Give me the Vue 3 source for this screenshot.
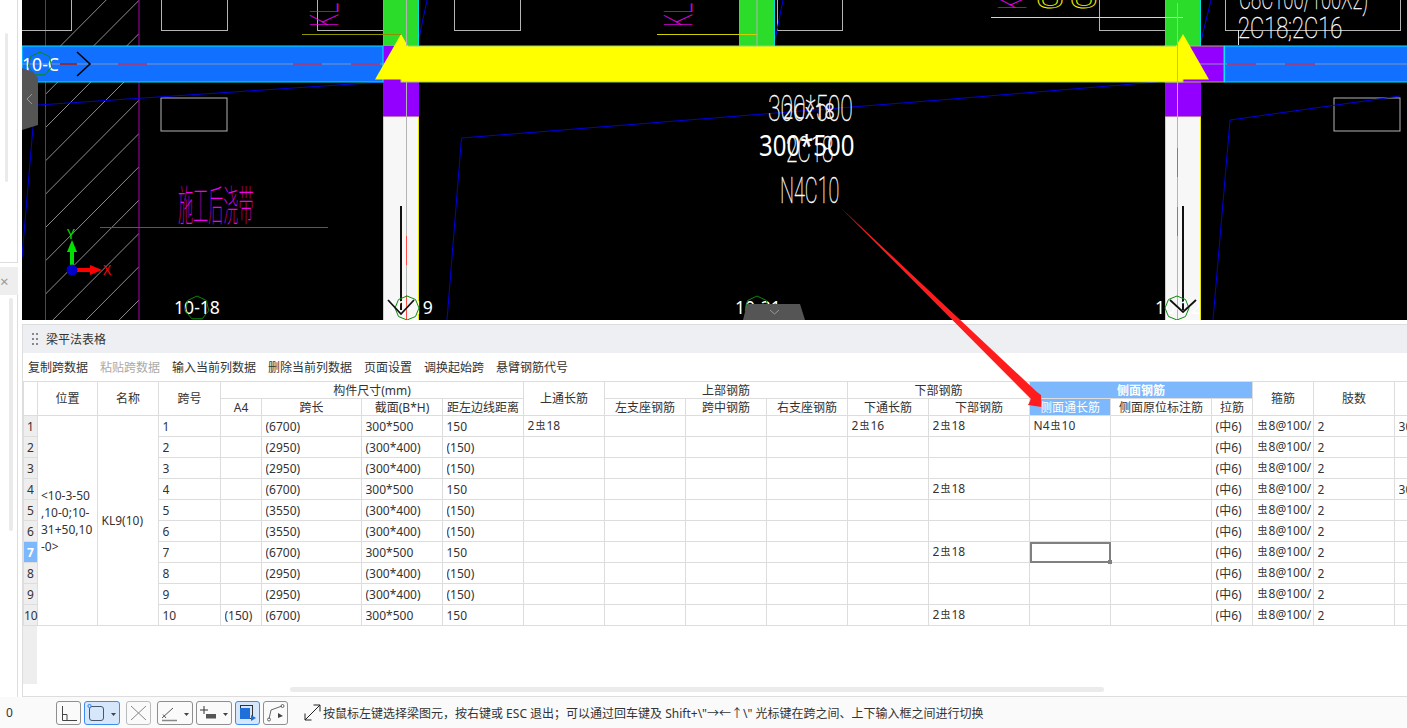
<script setup>
// column widths of the beam table, in pixels
const colWidths = [14, 60, 61, 62, 41, 100, 81, 81, 81, 81, 81, 81, 81, 101, 81, 101, 41, 61, 81, 100]

const tools = ['复制跨数据', '粘贴跨数据', '输入当前列数据', '删除当前列数据', '页面设置', '调换起始跨', '悬臂钢筋代号']

const topSteel = '2虫18'
const stirrup = '虫8@100/'
const rows = [
  ['1', '', '(6700)', '300*500', '150', topSteel, '', '', '', '2虫16', topSteel, 'N4虫10', '', '(中6)', stirrup, '2', '300*500'],
  ['2', '', '(2950)', '(300*400)', '(150)', '', '', '', '', '', '', '', '', '(中6)', stirrup, '2', ''],
  ['3', '', '(2950)', '(300*400)', '(150)', '', '', '', '', '', '', '', '', '(中6)', stirrup, '2', ''],
  ['4', '', '(6700)', '300*500', '150', '', '', '', '', '', topSteel, '', '', '(中6)', stirrup, '2', '300*500'],
  ['5', '', '(3550)', '(300*400)', '(150)', '', '', '', '', '', '', '', '', '(中6)', stirrup, '2', ''],
  ['6', '', '(3550)', '(300*400)', '(150)', '', '', '', '', '', '', '', '', '(中6)', stirrup, '2', ''],
  ['7', '', '(6700)', '300*500', '150', '', '', '', '', '', topSteel, '', '', '(中6)', stirrup, '2', ''],
  ['8', '', '(2950)', '(300*400)', '(150)', '', '', '', '', '', '', '', '', '(中6)', stirrup, '2', ''],
  ['9', '', '(2950)', '(300*400)', '(150)', '', '', '', '', '', '', '', '', '(中6)', stirrup, '2', ''],
  ['10', '(150)', '(6700)', '300*500', '150', '', '', '', '', '', topSteel, '', '', '(中6)', stirrup, '2', '']
]

// the steel grade sign is drawn smaller than the rest of the cell
const splitSteel = (text) => text.split(/(虫)/).filter(Boolean)

const hatchLines = Array.from({ length: 12 }, (_, i) => -33 + i * 33.3)

const ngon = (cx, cy, r, n) =>
  Array.from({ length: n }, (_, i) => {
    const a = (i / n) * Math.PI * 2 - Math.PI / 2
    return `${(cx + r * Math.cos(a)).toFixed(1)},${(cy + r * Math.sin(a)).toFixed(1)}`
  }).join(' ')

const topRects = [[-10, 71], [161, 227], [317, 383], [454, 520], [777, 842], [1099, 1165], [1225, 1400]]
</script>

<template>
  <div class="page">
    <div class="main">
      <aside class="side">
        <div class="side-top"><i class="side-scroll"></i></div>
        <div class="side-title">×</div>
        <div class="side-bottom"><i class="side-scroll low"></i></div>
      </aside>

      <div class="work">
        <svg class="cad" viewBox="22 0 1385 320" width="1385" height="320">
          <rect x="22" y="0" width="1385" height="320" fill="#000" />

          <!-- hatch of the post-cast strip -->
          <clipPath id="hatchClip"><rect x="45.5" y="0" width="93.5" height="320" /></clipPath>
          <g clip-path="url(#hatchClip)" stroke="#8f8f8f" stroke-width="1">
            <line v-for="y in hatchLines" :key="y" x1="45.5" :y1="y + 94" x2="139" :y2="y" />
          </g>
          <line x1="45.5" y1="0" x2="45.5" y2="320" stroke="#b000b0" />
          <line x1="139" y1="0" x2="139" y2="320" stroke="#b000b0" />

          <!-- small outlined boxes -->
          <g fill="none" stroke="#b4b4b4" stroke-width="1">
            <rect v-for="r in topRects" :key="r[0]" :x="r[0] + 0.5" y="-10" :width="r[1] - r[0]" height="40.5" />
            <rect x="161" y="98" width="66" height="33" />
            <rect x="1334" y="98" width="66" height="33" />
          </g>

          <!-- slab boundaries -->
          <g fill="none" stroke="#0000e0" stroke-width="1">
            <polyline points="22,257 33,127 38,105 383,82" />
            <polyline points="447,320 461.5,138 940,100 1157,82" />
            <polyline points="1213,320 1230,120 1400,96" />
            <line x1="418" y1="43" x2="427" y2="0" />
            <line x1="774" y1="45" x2="783" y2="0" />
            <line x1="1200" y1="45" x2="1211" y2="0" />
          </g>

          <!-- columns -->
          <g fill="#2bdc2b" stroke="#00e0e0" stroke-width="1">
            <rect x="383.5" y="-2" width="35" height="48" />
            <rect x="739.5" y="-2" width="35" height="48" />
            <rect x="1165.5" y="-2" width="35" height="48" />
          </g>
          <g fill="#f7f7f7" stroke="#e8e800" stroke-width="1">
            <rect x="383.5" y="116" width="35" height="206" />
            <rect x="1165.5" y="116" width="35" height="206" />
          </g>
          <rect x="383" y="82" width="36" height="34.5" fill="#9400ff" />
          <rect x="1165" y="82" width="36" height="34.5" fill="#9400ff" />
          <rect x="383" y="46" width="36" height="36" fill="#9400ff" />
          <rect x="1165" y="46" width="59" height="36" fill="#9400ff" stroke="#b0b050" />

          <!-- beam KL9, the blue parts are the unselected spans -->
          <rect x="22" y="46" width="361" height="36" fill="#1170ff" stroke="#00e8ff" />
          <rect x="1224.5" y="46" width="190" height="36" fill="#1170ff" stroke="#00e8ff" />
          <line x1="22" y1="64" x2="401" y2="64" stroke="#8494c4" />
          <line x1="1183" y1="64" x2="1407" y2="64" stroke="#8494c4" />
          <g stroke="#a82c70" stroke-width="1.5">
            <line x1="60" y1="64" x2="77" y2="64" stroke="#a01010" />
            <line x1="118" y1="64" x2="147" y2="64" />
            <line x1="293" y1="64" x2="322" y2="64" />
            <line x1="351" y1="64" x2="380" y2="64" />
            <line x1="1227" y1="64" x2="1256" y2="64" />
            <line x1="1285" y1="64" x2="1315" y2="64" />
          </g>

          <!-- selected span in yellow -->
          <rect x="401" y="46" width="782" height="36" fill="#ff0" stroke="#9ad070" stroke-width="1" />
          <polygon points="401,34 375,79.5 427,79.5" fill="#ff0" />
          <polygon points="1183,34 1157,79.5 1209,79.5" fill="#ff0" />
          <line x1="302" y1="34.5" x2="401" y2="34.5" stroke="#8f8f00" />
          <line x1="657" y1="34.5" x2="757" y2="34.5" stroke="#d0d000" />
          <line x1="991" y1="17.5" x2="1183" y2="17.5" stroke="#f0f000" />

          <!-- axis lines through the columns -->
          <g stroke="#b4b4b4" stroke-width="1">
            <line x1="406.5" y1="0" x2="406.5" y2="46" />
            <line x1="406.5" y1="82" x2="406.5" y2="320" />
            <line x1="757" y1="0" x2="757" y2="46" />
            <line x1="1177.5" y1="3" x2="1177.5" y2="320" />
            <line x1="1238.5" y1="30" x2="1238.5" y2="45" stroke="#ddd" />
          </g>
          <g stroke="#ff4a4a" stroke-width="1">
            <line x1="406.5" y1="236" x2="406.5" y2="265" />
            <line x1="406.5" y1="295" x2="406.5" y2="320" />
            <line x1="1177.5" y1="148" x2="1177.5" y2="177" />
            <line x1="1177.5" y1="207" x2="1177.5" y2="236" />
          </g>
          <line x1="401" y1="206" x2="401" y2="310" stroke="#111" stroke-width="2" />
          <line x1="1183" y1="206" x2="1183" y2="310" stroke="#111" stroke-width="2" />

          <!-- CAD notes -->
          <g class="cad-thin" fill="#fff" stroke="#fff" stroke-width=".35">
            <text transform="translate(768 121) scale(.62 1)" font-size="37">300*500</text>
            <text transform="translate(786 162) scale(.56 1)" font-size="37">2C18</text>
            <text transform="translate(780 203) scale(.535 1)" font-size="37">N4C10</text>
            <text transform="translate(1239 9) scale(.58 1)" font-size="32">C8C100/100X2)</text>
            <text transform="translate(1238 38) scale(.73 1)" font-size="30">2C18;2C16</text>
          </g>
          <text class="cad-regular" transform="translate(783 119) scale(.82 1)" fill="#eee" font-size="22">2Cx18</text>
          <text class="cad-regular" transform="translate(759 156) scale(.826 1)" fill="#fff" font-size="29">300*500</text>
          <text class="cad-hair" transform="translate(178 221) scale(.36 1)" font-size="42" fill="#f000f0">施工后浇带</text>
          <line x1="100" y1="227.5" x2="328" y2="227.5" stroke="#d400d4" />
          <g class="cad-thin" font-size="38" fill="#f000f0" stroke="#f000f0" stroke-width=".3">
            <text transform="translate(338 27) rotate(-90) scale(.55 1)">KL</text>
            <text transform="translate(692 27) rotate(-90) scale(.55 1)">KL</text>
            <text transform="translate(1026 10) rotate(-90) scale(.55 1)">KL</text>
          </g>
          <text transform="translate(1036 8) scale(1.1 .8)" font-size="46" letter-spacing="5" fill="none" stroke="#f0f000" font-family="Liberation Sans">88</text>

          <!-- grid labels -->
          <g class="cad-label" fill="#fff" font-size="17.6">
            <text x="22" y="71">10-C</text>
            <text x="174" y="314">10-18</text>
            <text x="387" y="314">10-19</text>
            <text x="735" y="314">10-21</text>
            <text x="1155" y="314">10-22</text>
          </g>
          <g fill="none" stroke="#0a8a0a" stroke-width="1">
            <polygon :points="ngon(40, 64, 12, 7)" />
            <polygon :points="ngon(197, 308, 12, 7)" />
            <polygon :points="ngon(407, 308, 12, 8)" />
            <polygon :points="ngon(757, 308, 12, 7)" />
            <polygon :points="ngon(1177, 308, 12, 8)" />
          </g>
          <polyline points="77,52 90,64 77,76" fill="none" stroke="#000" stroke-width="1.6" />
          <polyline points="388,300 401,314 414,300" fill="none" stroke="#111" stroke-width="1.8" />
          <polyline points="1170,300 1183,312 1196,300" fill="none" stroke="#111" stroke-width="1.8" />

          <!-- coordinate axes -->
          <rect x="70" y="250" width="4" height="18" fill="#00e000" />
          <polygon points="72,240 67,252 77,252" fill="#00e000" />
          <rect x="76" y="268" width="16" height="4" fill="#f00" />
          <polygon points="102,270 90,265 90,275" fill="#f00" />
          <circle cx="72" cy="270" r="5.5" fill="#0000c8" />
          <text class="cad-label" x="67" y="239" font-size="14" fill="#00e000">Y</text>
          <text class="cad-label" x="103" y="275" font-size="14" fill="#f00">X</text>

          <!-- collapse handles -->
          <polygon points="22,68 33,72 38,78 38,125 22,130" fill="#555" />
          <polyline points="32,94 27,99 32,104" fill="none" stroke="#999" stroke-width="1" />
          <polygon points="743,320 747,304 800,304 805,320" fill="#555" />
          <polyline points="770,310 774.5,314 779,310" fill="none" stroke="#999" stroke-width="1" />
        </svg>

        <div class="gap"></div>

        <section class="panel">
          <header class="panel-head">
            <span class="grip"><i v-for="n in 6" :key="n"></i></span>
            <span>梁平法表格</span>
          </header>
          <nav class="tools">
            <span v-for="(t, i) in tools" :key="t" :class="{ off: i === 1 }">{{ t }}</span>
          </nav>

          <div class="sheet">
            <table>
              <colgroup>
                <col v-for="(w, i) in colWidths" :key="i" :style="{ width: w + 'px' }" />
              </colgroup>
              <thead>
                <tr>
                  <th rowspan="2"></th>
                  <th rowspan="2">位置</th>
                  <th rowspan="2">名称</th>
                  <th rowspan="2">跨号</th>
                  <th colspan="4">构件尺寸(mm)</th>
                  <th rowspan="2">上通长筋</th>
                  <th colspan="3">上部钢筋</th>
                  <th colspan="2">下部钢筋</th>
                  <th colspan="3" class="picked strong">侧面钢筋</th>
                  <th rowspan="2">箍筋</th>
                  <th rowspan="2">肢数</th>
                  <th rowspan="2"></th>
                </tr>
                <tr>
                  <th>A4</th>
                  <th>跨长</th>
                  <th>截面(B*H)</th>
                  <th>距左边线距离</th>
                  <th>左支座钢筋</th>
                  <th>跨中钢筋</th>
                  <th>右支座钢筋</th>
                  <th>下通长筋</th>
                  <th>下部钢筋</th>
                  <th class="picked">侧面通长筋</th>
                  <th>侧面原位标注筋</th>
                  <th>拉筋</th>
                </tr>
              </thead>
              <tbody>
                <tr v-for="(row, r) in rows" :key="r">
                  <td class="num" :class="{ current: r === 6 }">{{ r + 1 }}</td>
                  <template v-if="r === 0">
                    <td rowspan="10" class="pos">&lt;10-3-50<br />,10-0;10-<br />31+50,10<br />-0&gt;</td>
                    <td rowspan="10">KL9(10)</td>
                  </template>
                  <td v-for="(cell, c) in row" :key="c" :class="{ active: r === 6 && c === 11 }">
                    <div class="clip">
                      <span v-for="(p, k) in splitSteel(cell)" :key="k" :class="{ steel: p === '虫' }">{{ p }}</span>
                    </div>
                    <i v-if="r === 6 && c === 11" class="fill-handle"></i>
                  </td>
                </tr>
              </tbody>
            </table>
          </div>
          <div class="hscroll"><i></i></div>
        </section>
      </div>
    </div>

    <footer class="status">
      <span class="zero">0</span>
      <button class="tb w25">
        <svg width="23" height="22" viewBox="0 0 23 22" fill="none" stroke="#444"><path d="M5.5 4v14.5H20M5.5 12.5H10v6" /></svg>
      </button>
      <button class="tb w36 on">
        <svg width="34" height="22" viewBox="0 0 34 22" fill="none"><rect x="4.5" y="4.5" width="14" height="14" rx="2.5" stroke="#4a5568" /><circle cx="4.5" cy="4" r="1.6" fill="#d6e6fb" stroke="#2f80ed" /><path d="M26 11h5l-2.5 3z" fill="#444" /></svg>
      </button>
      <button class="tb w25 dim">
        <svg width="23" height="22" viewBox="0 0 23 22" fill="none" stroke="#888"><path d="M4 4l15 14M19 4L4 18" /></svg>
      </button>
      <button class="tb w36">
        <svg width="34" height="22" viewBox="0 0 34 22" fill="none"><path d="M4 16L15 6M5 12.5l3 3.5" stroke="#555" /><path d="M4 18.5h15" stroke="#888" stroke-width="1.5" /><path d="M26 11h5l-2.5 3z" fill="#444" /></svg>
      </button>
      <button class="tb w36">
        <svg width="34" height="22" viewBox="0 0 34 22" fill="none"><path d="M7 4v8M3 8h8" stroke="#333" /><rect x="9" y="12" width="10" height="4.5" fill="#555" /><path d="M26 11h5l-2.5 3z" fill="#444" /></svg>
      </button>
      <button class="tb w25 on">
        <svg width="23" height="22" viewBox="0 0 23 22" fill="none"><rect x="4.5" y="3.5" width="12" height="13" stroke="#333" /><rect x="4" y="6" width="10" height="11" fill="#1e6fd9" /><path d="M15 13l5 3-5 3z" fill="#1e6fd9" /></svg>
      </button>
      <button class="tb w25">
        <svg width="23" height="22" viewBox="0 0 23 22" fill="none"><path d="M5 17l2-9 11-4" stroke="#666" /><circle cx="5" cy="17.5" r="1.5" stroke="#666" /><circle cx="18.5" cy="4" r="1.5" stroke="#666" /><path d="M14 11l5 3-5 2z" fill="#444" /></svg>
      </button>
      <svg class="expand" width="17" height="17" viewBox="0 0 17 17" fill="none" stroke="#222"><path d="M1 16L16 1M9.5 1H16v6.5M1 9.5V16h6.5" /></svg>
      <span class="hint">按鼠标左键选择梁图元，按右键或 ESC 退出；可以通过回车键及 Shift+\"→←↑\" 光标键在跨之间、上下输入框之间进行切换</span>
    </footer>

    <!-- red annotation arrow laid over the screenshot -->
    <svg class="note-arrow" width="1407" height="728" viewBox="0 0 1407 728">
      <polygon points="841,208 1037,392 1041,395 1041.5,407 1028,405 1031,399" fill="#ff1c1c" />
    </svg>
  </div>
</template>

<style scoped>
.page {
  position: relative;
  width: 1407px;
  height: 728px;
  overflow: hidden;
  display: flex;
  flex-direction: column;
  background: #fff;
  color: #333;
  font-family: "Noto Sans", "Noto Sans CJK SC", sans-serif;
  font-size: 12px;
}

.main {
  display: flex;
  height: 697px;
}

/* left docked panels, only their edge is visible */
.side {
  width: 22px;
  flex: none;
  display: flex;
  flex-direction: column;
}

.side-top {
  height: 263px;
  width: 18px;
  box-sizing: border-box;
  padding: 33px 0 0 5px;
  border-right: 1px solid #ddd;
  border-bottom: 1px solid #ddd;
}

.side-scroll {
  display: block;
  width: 3px;
  height: 149px;
  background: #eaeaea;
  border-radius: 2px;
}

.side-scroll.low {
  width: 4px;
  height: 233px;
  margin-left: 9px;
}

.side-title {
  width: 18px;
  height: 28px;
  margin-top: 4px;
  box-sizing: border-box;
  background: #eeeeef;
  color: #999;
  font-size: 15px;
  line-height: 28px;
}

.side-bottom {
  flex: 1;
  width: 18px;
  box-sizing: border-box;
  padding-top: 3px;
  border-right: 1px solid #ddd;
}

.work {
  flex: 1;
  min-width: 0;
  display: flex;
  flex-direction: column;
}

.cad {
  display: block;
  flex: none;
}

.cad-thin {
  font-family: Roboto, "Noto Sans CJK SC", sans-serif;
  font-weight: 100;
}

.cad-hair {
  font-family: "Noto Sans CJK SC", sans-serif;
  font-weight: 100;
}

.cad-regular,
.cad-label {
  font-family: "Noto Sans", sans-serif;
}

.gap {
  height: 4px;
  flex: none;
  background: #fff;
}

.panel {
  flex: 1;
  min-height: 0;
  display: flex;
  flex-direction: column;
  border-left: 1px solid #ddd;
  border-top: 1px solid #ddd;
  border-bottom: 1px solid #ddd;
}

.panel-head {
  height: 28px;
  flex: none;
  display: flex;
  align-items: center;
  gap: 8px;
  padding-left: 9px;
  background: #eeeff2;
}

.grip {
  display: grid;
  grid-template-columns: 2px 2px;
  gap: 3px 2px;
}

.grip i {
  width: 2px;
  height: 2px;
  background: #888;
}

.tools {
  height: 28px;
  flex: none;
  display: flex;
  align-items: center;
  gap: 12px;
  padding-left: 5px;
}

.tools .off {
  color: #aaa;
}

.sheet {
  flex: 1;
  min-height: 0;
  overflow: hidden;
  background: linear-gradient(to right, #eee 14px, #fff 14px);
}

table {
  border-collapse: collapse;
  table-layout: fixed;
  width: 1437px;
  background: #fff;
}

th,
td {
  border: 1px solid #ddd;
  padding: 0;
  box-sizing: border-box;
  overflow: hidden;
  white-space: nowrap;
}

th {
  height: 17px;
  font-weight: 400;
  line-height: 15px;
  text-align: center;
}

th.picked {
  background: #7cb8fb;
  color: #fff;
}

th.strong {
  font-weight: 700;
}

td {
  height: 21px;
  padding-left: 3.5px;
  line-height: 19px;
  position: relative;
}

td.num {
  padding: 0;
  background: #eee;
  text-align: center;
  overflow: visible;
}

td.num.current {
  background: #7cb8fb;
  color: #fff;
  font-weight: 700;
}

td.pos {
  line-height: 17px;
  padding-left: 3px;
}

td.active {
  outline: 2px solid #808080;
  outline-offset: -2px;
  overflow: visible;
}

.clip {
  overflow: hidden;
}

.steel {
  display: inline-block;
  font-size: 10px;
  margin: 0 1px;
  transform: translateY(-1px);
}

.fill-handle {
  position: absolute;
  right: -2px;
  bottom: -2px;
  width: 4px;
  height: 4px;
  background: #808080;
}

.hscroll {
  height: 12px;
  flex: none;
  padding: 3px 0 0 267px;
  box-sizing: border-box;
}

.hscroll i {
  display: block;
  width: 814px;
  height: 5px;
  background: #ebebeb;
  border-radius: 3px;
}

.status {
  flex: 1;
  display: flex;
  align-items: center;
  background: #fafafa;
}

.zero {
  width: 56px;
  flex: none;
  padding-left: 6px;
  box-sizing: border-box;
}

.tb {
  height: 24px;
  margin-right: 3px;
  padding: 0;
  box-sizing: border-box;
  display: flex;
  align-items: center;
  background: #fafafa;
  border: 1px solid #8f8f8f;
  border-radius: 3px;
}

.w25 {
  width: 25px;
}

.w36 {
  width: 36px;
}

.tb.on {
  background: #d6e6fb;
  border-color: #3b8cf0;
}

.tb.dim {
  border-color: #bbb;
  margin-right: 6px;
}

.tb.w36.on {
  margin-right: 6px;
}

.expand {
  margin: 0 2px 0 13px;
  flex: none;
}

.hint {
  white-space: nowrap;
  color: #333;
}

.note-arrow {
  position: absolute;
  left: 0;
  top: 0;
  pointer-events: none;
}
</style>

<style>
html,
body {
  margin: 0;
  overflow: hidden;
}
</style>
